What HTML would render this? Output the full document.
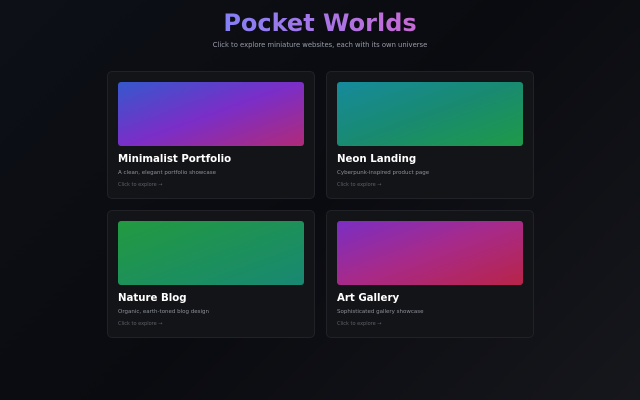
<!DOCTYPE html>
<html><head><style>
*{margin:0;padding:0;box-sizing:border-box}
body{width:640px;height:400px;overflow:hidden;background:linear-gradient(135deg,#0d1017 0%,#0a0b10 50%,#16171c 100%);font-family:"DejaVu Sans","Liberation Sans",sans-serif;position:relative}
.hw{position:absolute;top:7px;left:0;width:640px;text-align:center}
h1{display:inline-block;font-size:24px;font-weight:bold;background:linear-gradient(90deg,#8580f6,#c86ad4);-webkit-background-clip:text;color:transparent;line-height:32px}
.sub{position:absolute;top:41px;width:640px;text-align:center;font-size:6.8px;color:#9a9ca8}
.card{position:absolute;width:208px;height:128px;background:#131418;border:1px solid #202228;border-radius:5px}
.g{position:absolute;left:10px;top:10px;width:186px;height:64px;border-radius:3px}
.t{position:absolute;left:10px;top:82px;font-size:10.2px;font-weight:bold;color:#fff}
.d{position:absolute;left:10px;top:98px;font-size:5.5px;color:#8e909a}
.c{position:absolute;left:10px;top:110px;font-size:5px;color:#5e6069}
</style></head><body>
<div class="hw"><h1>Pocket Worlds</h1></div>
<div class="sub">Click to explore miniature websites, each with its own universe</div>
<div class="card" style="left:107px;top:71px"><div class="g" style="background:linear-gradient(160deg,#3558cc 0%,#7a2ec8 50%,#b02a78 100%)"></div><div class="t">Minimalist Portfolio</div><div class="d">A clean, elegant portfolio showcase</div><div class="c">Click to explore →</div></div>
<div class="card" style="left:326px;top:71px"><div class="g" style="background:linear-gradient(160deg,#168a9c 0%,#198a70 50%,#1e9a48 100%)"></div><div class="t">Neon Landing</div><div class="d">Cyberpunk-inspired product page</div><div class="c">Click to explore →</div></div>
<div class="card" style="left:107px;top:210px"><div class="g" style="background:linear-gradient(160deg,#229a40 0%,#1c8f5e 60%,#188872 100%)"></div><div class="t">Nature Blog</div><div class="d">Organic, earth-toned blog design</div><div class="c">Click to explore →</div></div>
<div class="card" style="left:326px;top:210px"><div class="g" style="background:linear-gradient(160deg,#7a2ec4 0%,#a82a88 50%,#b82448 100%)"></div><div class="t">Art Gallery</div><div class="d">Sophisticated gallery showcase</div><div class="c">Click to explore →</div></div>
</body></html>
